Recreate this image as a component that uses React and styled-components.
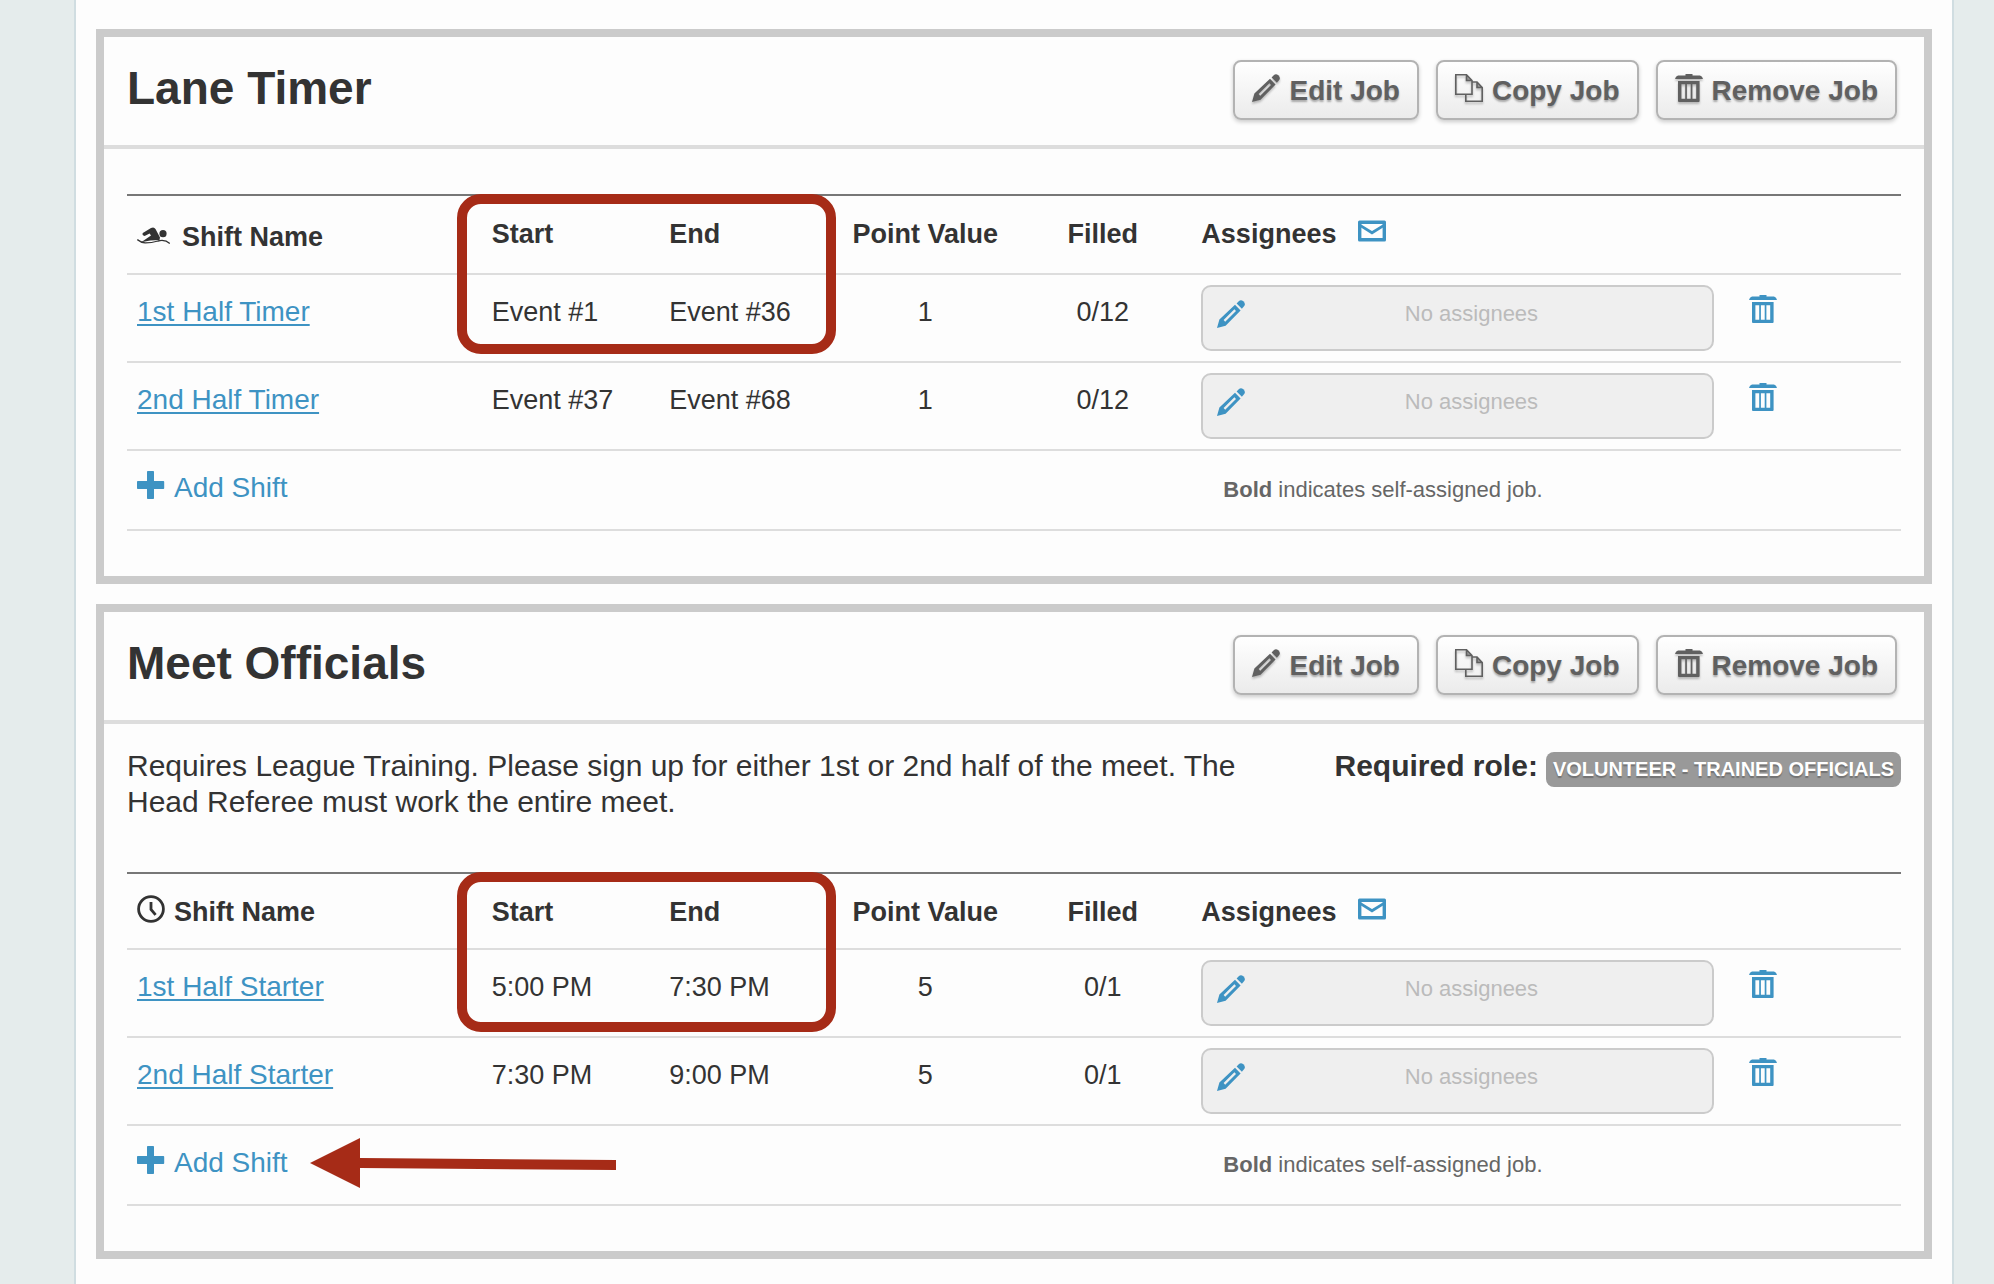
import React from 'react';
import styled, { createGlobalStyle } from 'styled-components';

const jobs = [
  {
    title: 'Lane Timer',
    icon: 'swimmer',
    shifts: [
      { name: '1st Half Timer', start: 'Event #1', end: 'Event #36', points: 1, filled: '0/12' },
      { name: '2nd Half Timer', start: 'Event #37', end: 'Event #68', points: 1, filled: '0/12' },
    ],
  },
  {
    title: 'Meet Officials',
    icon: 'clock',
    description:
      'Requires League Training. Please sign up for either 1st or 2nd half of the meet. The Head Referee must work the entire meet.',
    role: 'Volunteer - Trained Officials',
    pointToAdd: true,
    shifts: [
      { name: '1st Half Starter', start: '5:00 PM', end: '7:30 PM', points: 5, filled: '0/1' },
      { name: '2nd Half Starter', start: '7:30 PM', end: '9:00 PM', points: 5, filled: '0/1' },
    ],
  },
];

const PencilIcon = () => (
  <Icon width="28" height="28" viewBox="0 0 28 28" aria-hidden="true">
    <path d="M19.6 3.4 L22 1 Q24 -0.6 26.3 1.2 Q28.8 3.6 27.4 5.8 L24.9 8.7 Z" />
    <path
      fillRule="evenodd"
      d="M18 4.8 L23.6 10.4 L8.6 25.8 L0 28 L2.4 19.6 Z M17.4 9.3 L6.6 20.1 L8.2 21.7 L19 10.9 Z"
    />
  </Icon>
);

const TrashIcon = () => (
  <Icon width="28" height="28" viewBox="0 0 28 28" aria-hidden="true">
    <path d="M10.5 0 H17.5 V1.5 H25 Q27.5 2 28 5 H0 Q0.5 2 3 1.5 H10.5 Z" />
    <path
      fillRule="evenodd"
      d="M3 7 H24.6 V27 Q24.6 28 23.6 28 H4 Q3 28 3 27 Z M6.4 10.2 V24.8 H10.2 V10.2 Z M11.9 10.2 V24.8 H15.7 V10.2 Z M17.4 10.2 V24.8 H21.2 V10.2 Z"
    />
  </Icon>
);

const CopyIcon = () => (
  <Icon width="28" height="28" viewBox="0 0 28 28" aria-hidden="true">
    <path
      fill="none"
      stroke="currentColor"
      strokeWidth="1.6"
      d="M10.8 20.2 H0.8 V0.8 H11.5 L17 6.5 V20.2 H10.8 M11.5 0.8 V6.5 H17 M17 8 H22 L27.2 13.5 V27.2 H10.8 V20.2 M22 8 V13.5 H27.2"
    />
    <path d="M11.5 0.8 L17 6.5 H11.5 Z M22 8 L27.2 13.5 H22 Z" opacity="0.5" />
  </Icon>
);

const MailIcon = () => (
  <Icon width="28" height="22" viewBox="0 0 28 22" aria-hidden="true">
    <path
      fillRule="evenodd"
      d="M1.5 0.5 H26.5 Q28 0.5 28 2 V20 Q28 21.5 26.5 21.5 H1.5 Q0 21.5 0 20 V2 Q0 0.5 1.5 0.5 Z M3.4 4 V18 H24.6 V4 Z"
    />
    <path fill="none" stroke="currentColor" strokeWidth="2.8" d="M2.5 5.6 L14 12.8 L25.5 5.6" />
  </Icon>
);

const PlusIcon = () => (
  <Icon width="28" height="28" viewBox="0 0 28 28" aria-hidden="true">
    <path d="M10.8 0 H16.2 Q17 0 17 0.8 V10 H26.4 Q27.2 10 27.2 10.8 V17.2 Q27.2 18 26.4 18 H17 V27.2 Q17 28 16.2 28 H10.8 Q10 28 10 27.2 V18 H0.8 Q0 18 0 17.2 V10.8 Q0 10 0.8 10 H10 V0.8 Q10 0 10.8 0 Z" />
  </Icon>
);

const ClockIcon = () => (
  <Icon width="28" height="28" viewBox="0 0 28 28" aria-hidden="true">
    <circle cx="14" cy="14" r="12.4" fill="none" stroke="currentColor" strokeWidth="2.8" />
    <path fill="none" stroke="currentColor" strokeWidth="2.8" d="M14 7 V14.5 L18.6 19.8" />
  </Icon>
);

const SwimmerIcon = () => (
  <Icon width="34" height="18" viewBox="0 0 34 18" aria-hidden="true">
    <circle cx="26" cy="6.7" r="3.6" />
    <path d="M5.8 6 L14 1 Q17 -0.4 18.5 2 L23 10.5 L22.5 13 Q13 13 4.2 15.2 L14 8.6 L12.6 6.6 L7.6 8.9 Q4.6 8.6 5.8 6 Z" />
    <path
      fill="none"
      stroke="currentColor"
      strokeWidth="1.3"
      d="M0.3 12.6 Q4 15.6 8 15.9 Q14 16 21 14 Q28 12.2 32.8 16.4"
    />
  </Icon>
);

const Arrow = () => (
  <ArrowSvg width="306" height="50" viewBox="0 0 306 50" aria-hidden="true">
    <path d="M0 25 L50 0 V20 L306 22 V32 L50 30 V50 Z" />
  </ArrowSvg>
);

const ShiftRow = ({ shift }) => (
  <tr>
    <Cell>
      <ShiftLink href="#shift">{shift.name}</ShiftLink>
    </Cell>
    <Cell>{shift.start}</Cell>
    <Cell>{shift.end}</Cell>
    <Cell $center>{shift.points}</Cell>
    <Cell $center>{shift.filled}</Cell>
    <BoxCell>
      <AssigneeBox type="button">
        <PencilIcon />
        <span>No assignees</span>
      </AssigneeBox>
    </BoxCell>
    <ActionCell>
      <IconButton type="button" aria-label={`Remove ${shift.name}`}>
        <TrashIcon />
      </IconButton>
    </ActionCell>
  </tr>
);

const Job = ({ job }) => (
  <Card>
    <CardHeader>
      <Title>{job.title}</Title>
      <Actions>
        <JobButton type="button"><PencilIcon />Edit Job</JobButton>
        <JobButton type="button"><CopyIcon />Copy Job</JobButton>
        <JobButton type="button"><TrashIcon />Remove Job</JobButton>
      </Actions>
    </CardHeader>
    <CardBody $described={Boolean(job.description)}>
      {job.description && (
        <Details>
          <Description>{job.description}</Description>
          <Role>
            Required role:
            <Badge>{job.role}</Badge>
          </Role>
        </Details>
      )}
      <TableWrap>
        <Table>
          <colgroup>
            <Col $width={20} />
            <Col $width={10} />
            <Col $width={10} />
            <Col $width={10} />
            <Col $width={10} />
            <Col $width={30} />
            <Col $width={10} />
          </colgroup>
          <thead>
            <tr>
              <HeadCell>
                <Label $tall={job.icon === 'swimmer'}>
                  {job.icon === 'swimmer' ? <SwimmerIcon /> : <ClockIcon />}
                  Shift Name
                </Label>
              </HeadCell>
              <HeadCell>Start</HeadCell>
              <HeadCell>End</HeadCell>
              <HeadCell $center>Point Value</HeadCell>
              <HeadCell $center>Filled</HeadCell>
              <HeadCell colSpan={2}>
                <AssigneeLabel>
                  Assignees
                  <IconButton type="button" aria-label="Email assignees">
                    <MailIcon />
                  </IconButton>
                </AssigneeLabel>
              </HeadCell>
            </tr>
          </thead>
          <tbody>
            {job.shifts.map((shift) => (
              <ShiftRow key={shift.name} shift={shift} />
            ))}
          </tbody>
          <tfoot>
            <tr>
              <FootCell colSpan={5}>
                <AddLink href="#add">
                  <PlusIcon />
                  Add Shift
                  {job.pointToAdd && <Arrow />}
                </AddLink>
              </FootCell>
              <FootCell colSpan={2}>
                <Note>
                  <b>Bold</b> indicates self-assigned job.
                </Note>
              </FootCell>
            </tr>
          </tfoot>
        </Table>
        <Highlight />
      </TableWrap>
    </CardBody>
  </Card>
);

const App = () => (
  <>
    <GlobalStyle />
    <Page>
      {jobs.map((job) => (
        <Job key={job.title} job={job} />
      ))}
    </Page>
  </>
);

const GlobalStyle = createGlobalStyle`
  * {
    box-sizing: border-box;
  }

  body {
    margin: 0;
    background: #e5ecec;
    color: #333;
    font-family: "Liberation Sans", Arial, sans-serif;
    font-size: 28px;
  }

  button {
    font-family: inherit;
    cursor: pointer;
  }
`;

const Page = styled.main`
  display: flex;
  flex-direction: column;
  gap: 20px;
  min-height: 100vh;
  margin: 0 40px 0 74px;
  padding: 29px 20px 26px;
  border: solid #d0dde1;
  border-width: 0 2px;
  background: #fdfdfd;
`;

const Card = styled.section`
  border: 8px solid #cbcbcb;
`;

const CardHeader = styled.header`
  display: flex;
  justify-content: space-between;
  align-items: flex-start;
  padding: 23px 27px 25px 23px;
  border-bottom: 4px solid #ddd;
`;

const Title = styled.h2`
  margin: 0;
  font-size: 46px;
  line-height: 56px;
`;

const Actions = styled.div`
  display: flex;
  gap: 17px;
`;

const Icon = styled.svg`
  display: block;
  flex: none;
  fill: currentColor;
`;

const JobButton = styled.button`
  display: flex;
  align-items: center;
  gap: 9px;
  height: 60px;
  padding: 2px 17px 0;
  border: 2px solid #b3b3b3;
  border-radius: 8px;
  background: linear-gradient(#fff, #ebebeb);
  box-shadow: 0 2px 4px rgba(0, 0, 0, 0.2);
  color: #606060;
  font-size: 28px;
  font-weight: bold;
  text-shadow: 0 2px 2px rgba(0, 0, 0, 0.3);

  ${Icon} {
    margin-bottom: 6px;
    filter: drop-shadow(0 2px 1px rgba(0, 0, 0, 0.25));
  }
`;

const CardBody = styled.div`
  padding: ${({ $described }) => ($described ? '24px' : '45px')} 23px 45px;
`;

const Details = styled.div`
  display: flex;
  justify-content: space-between;
  gap: 50px;
  margin-bottom: 52px;
  font-size: 30px;
  line-height: 36px;
`;

const Description = styled.p`
  flex: 1;
  margin: 0;
`;

const Role = styled.div`
  display: flex;
  align-items: baseline;
  align-self: flex-start;
  gap: 8px;
  font-weight: bold;
`;

const Badge = styled.span`
  padding: 0 7px;
  border-radius: 8px;
  background: #999;
  color: #fff;
  font-size: 20px;
  line-height: 35px;
  text-transform: uppercase;
  text-shadow: 0 2px 1px rgba(0, 0, 0, 0.25);
`;

const TableWrap = styled.div`
  position: relative;
`;

const Table = styled.table`
  width: 100%;
  table-layout: fixed;
  border-collapse: separate;
  border-spacing: 0;
  border-top: 2px solid #777;
  font-size: 27px;
  line-height: 42px;
`;

const Col = styled.col`
  width: ${({ $width }) => $width}%;
`;

const Cell = styled.td`
  padding: 16px 10px 12px;
  border-bottom: 2px solid #ddd;
  text-align: ${({ $center }) => ($center ? 'center' : 'left')};
  vertical-align: top;
  white-space: nowrap;
`;

const HeadCell = styled(Cell).attrs({ as: 'th' })`
  height: 76px;
  padding-top: 17px;
`;

const BoxCell = styled(Cell)`
  padding: 10px;
`;

const ActionCell = styled(Cell)`
  padding-left: 25px;
`;

const FootCell = styled(Cell)`
  height: 80px;
`;

const Label = styled.div`
  display: flex;
  align-items: center;
  gap: ${({ $tall }) => ($tall ? '11px' : '9px')};
  height: ${({ $tall }) => ($tall ? '48px' : '42px')};

  ${Icon} {
    margin-bottom: ${({ $tall }) => ($tall ? '2px' : '6px')};
  }
`;

const AssigneeLabel = styled.div`
  display: flex;
  gap: 22px;
`;

const ShiftLink = styled.a`
  color: #3e93c3;
  font-size: 28px;
  text-decoration: underline;
  text-decoration-thickness: 2px;
  text-underline-offset: 3px;
`;

const IconButton = styled.button`
  display: flex;
  align-items: center;
  height: 42px;
  padding: 0 0 6px;
  border: 0;
  background: none;
  color: #3e93c3;
`;

const AssigneeBox = styled.button`
  display: flex;
  align-items: center;
  width: 100%;
  padding: 13px 14px 21px;
  border: 2px solid #cbcbcb;
  border-radius: 10px;
  background: #efefef;
  color: #3e93c3;
  font-size: 22px;
  line-height: 28px;

  span {
    flex: 1;
    color: #bbb;
    text-align: center;
  }
`;

const AddLink = styled.a`
  position: relative;
  display: inline-flex;
  align-items: center;
  gap: 9px;
  height: 42px;
  color: #3e93c3;
  font-size: 28px;
  text-decoration: none;
  vertical-align: top;

  ${Icon} {
    margin-bottom: 6px;
  }
`;

const Note = styled.span`
  display: block;
  padding-left: 22px;
  color: #666;
  font-size: 22px;
  line-height: 46px;
`;

const Highlight = styled.div`
  position: absolute;
  top: 0;
  left: calc(20% - 25px);
  width: calc(20% + 24px);
  height: 160px;
  border: 10px solid #a62b17;
  border-radius: 24px;
  pointer-events: none;
`;

const ArrowSvg = styled.svg`
  position: absolute;
  top: -4px;
  left: calc(100% + 22px);
  fill: #a62b17;
`;

export default App;
